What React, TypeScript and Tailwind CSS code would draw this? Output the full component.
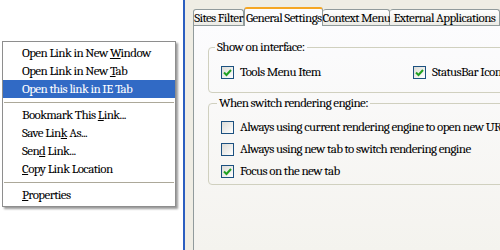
import React from "react";

const Check = ({ checked }: { checked: boolean }) => (
  <span className="w-[13px] h-[13px] shrink-0 border border-[#1c5180] bg-gradient-to-br from-[#dcdcd7] to-white flex items-center justify-center">
    {checked && (
      <svg width="9" height="9" viewBox="0 0 9 9">
        <path d="M1 4.5 L3.5 7 L8 2" fill="none" stroke="#21a121" strokeWidth="2" />
      </svg>
    )}
  </span>
);

const Item = ({ children, active }: { children: React.ReactNode; active?: boolean }) => (
  <div
    className={`h-[18px] pl-[19px] flex items-center whitespace-nowrap ${
      active ? "bg-[#316ac5] text-white" : "text-black"
    }`}
  >
    <span>{children}</span>
  </div>
);

const Sep = () => (
  <div className="h-[8px] flex items-center px-[1px]">
    <div className="h-px w-full bg-[#aca899]" />
  </div>
);

const Row = ({ checked, label }: { checked: boolean; label: string }) => (
  <div className="h-[16px] flex items-center gap-[6px] whitespace-nowrap">
    <Check checked={checked} />
    <span>{label}</span>
  </div>
);

export default function App() {
  return (
    <div className="w-[500px] h-[250px] overflow-hidden flex bg-white font-serif text-[13px] tracking-[-0.6px] text-black">
      {/* Context menu */}
      <div className="w-[183px] shrink-0 pt-[41px] pl-[2px]">
        <div className="w-[174px] border border-[#8e8e8e] bg-white py-[2px] shadow-[2px_2px_2px_rgba(0,0,0,0.4)]">
          <Item>
            Open Link in New <u>W</u>indow
          </Item>
          <Item>
            Open Link in New <u>T</u>ab
          </Item>
          <Item active>Open this link in IE Tab</Item>
          <Sep />
          <Item>
            Bookmark This <u>L</u>ink...
          </Item>
          <Item>
            Save Lin<u>k</u> As...
          </Item>
          <Item>
            Sen<u>d</u> Link...
          </Item>
          <Item>
            <u>C</u>opy Link Location
          </Item>
          <Sep />
          <Item>
            <u>P</u>roperties
          </Item>
        </div>
      </div>

      {/* Window frame edge */}
      <div className="w-[2px] shrink-0 bg-[#2c5fc0]" />

      {/* Options dialog */}
      <div className="w-[315px] shrink-0 bg-[#efede4] pl-[8px] pt-[7px] flex flex-col">
        <div className="h-[18px] flex items-end whitespace-nowrap">
          <div className="w-[56px] h-[16px] border border-b-0 border-[#919b9c] rounded-t-[3px] bg-gradient-to-b from-white to-[#ecebe6] flex items-center justify-center">
            Sites Filter
          </div>
          <div className="relative z-10 w-[87px] h-[19px] -mb-px border-x border-[#919b9c] border-t-2 border-t-[#f5a623] rounded-t-[3px] bg-[#fcfcfe] flex items-center justify-center">
            General Settings
          </div>
          <div className="w-[67px] h-[16px] border border-b-0 border-l-0 border-[#919b9c] rounded-t-[3px] bg-gradient-to-b from-white to-[#ecebe6] flex items-center justify-center">
            Context Menu
          </div>
          <div className="w-[120px] h-[16px] border border-b-0 border-l-0 border-[#919b9c] rounded-t-[3px] bg-gradient-to-b from-white to-[#ecebe6] flex items-center pl-[3px]">
            External Applications
          </div>
        </div>

        <div className="w-[340px] flex-1 border-l border-t border-[#919b9c] bg-gradient-to-b from-[#fcfcfe] to-[#f4f3ee] pl-[14px]">
          <fieldset className="mt-[14px] w-[310px] border border-[#d0d0bf] rounded-[4px] px-[12px] pt-[10px] pb-[12px]">
            <legend className="-ml-[6px] px-[2px] leading-[14px]">Show on interface:</legend>
            <div className="flex">
              <div className="w-[192px]">
                <Row checked label="Tools Menu Item" />
              </div>
              <Row checked label="StatusBar Icon" />
            </div>
          </fieldset>

          <fieldset className="mt-[3px] w-[310px] border border-[#d0d0bf] rounded-[4px] px-[12px] pt-[9px] pb-[5px] flex flex-col gap-[6px]">
            <legend className="-ml-[4px] px-[2px] leading-[14px]">When switch rendering engine:</legend>
            <Row checked={false} label="Always using current rendering engine to open new URL" />
            <Row checked={false} label="Always using new tab to switch rendering engine" />
            <Row checked label="Focus on the new tab" />
          </fieldset>
        </div>
      </div>
    </div>
  );
}
